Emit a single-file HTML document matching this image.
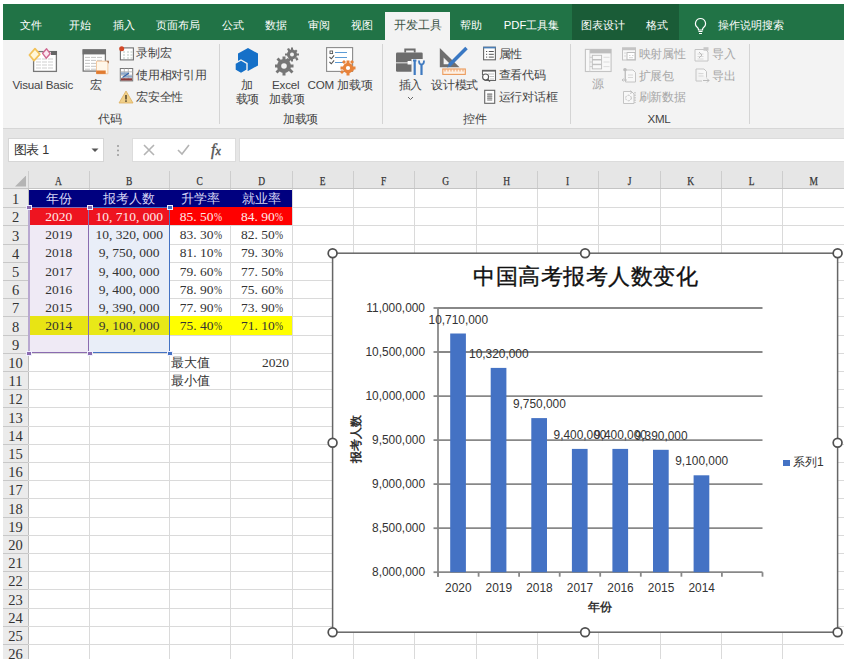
<!DOCTYPE html><html><head><meta charset="utf-8"><title>Excel</title><style>
html,body{margin:0;padding:0;width:844px;height:666px;overflow:hidden;background:#fff;position:relative;font-family:"Liberation Sans",sans-serif;}
.a{position:absolute;white-space:nowrap;}
.tab{position:absolute;top:18px;font-size:11.3px;line-height:14px;color:#fff;}
.rt{position:absolute;font-size:11.6px;letter-spacing:-0.2px;line-height:14px;color:#444;white-space:nowrap;}
.dis{color:#a6a6a6;}
.sep{position:absolute;top:44px;width:1px;height:80px;background:#d4d4d4;}
.cell{position:absolute;font-family:"Liberation Serif",serif;font-size:13.5px;line-height:17px;color:#333;white-space:nowrap;text-align:center;}
.p{display:inline-block;width:6.75px;text-align:left;}
.pc{display:inline-block;width:6.75px;transform:scaleX(.72);transform-origin:0 0;}
.cj{font-size:13px;}
.ch{position:absolute;font-family:"Liberation Serif",serif;font-size:13.5px;line-height:14px;color:#333;text-align:center;transform:scaleX(.7);-webkit-text-stroke:0.25px #333;}
.rh{position:absolute;left:3px;width:25px;font-family:"Liberation Serif",serif;font-size:14.5px;line-height:16px;color:#333;text-align:center;}
.ct{position:absolute;font-size:11.9px;color:#333;white-space:nowrap;}
</style></head><body>
<div class="a" style="left:3px;top:4px;width:841px;height:36px;background:#217346"></div>
<div class="a" style="left:572px;top:4px;width:106.5px;height:36px;background:#1a5c37"></div>
<div class="a" style="left:385px;top:12px;width:65px;height:29px;background:#f3f3f3"></div>
<div class="tab" style="left:20px">文件</div>
<div class="tab" style="left:68.5px">开始</div>
<div class="tab" style="left:112.5px">插入</div>
<div class="tab" style="left:155.5px">页面布局</div>
<div class="tab" style="left:222px">公式</div>
<div class="tab" style="left:264.6px">数据</div>
<div class="tab" style="left:308.2px">审阅</div>
<div class="tab" style="left:351.2px">视图</div>
<div class="tab" style="left:460.3px">帮助</div>
<div class="tab" style="left:503.8px">PDF工具集</div>
<div class="tab" style="left:580.7px">图表设计</div>
<div class="tab" style="left:646.3px">格式</div>
<div class="tab" style="left:718px">操作说明搜索</div>
<div class="tab" style="left:394.3px;color:#3b5446;font-size:11.9px">开发工具</div>
<svg class="a" style="left:692.5px;top:17px" width="15" height="18" viewBox="0 0 15 18"><path d="M7.5 1.5a5 5 0 0 0-3 9c.8.7 1 1.5 1 2.5h4c0-1 .2-1.8 1-2.5a5 5 0 0 0-3-9z" fill="none" stroke="#fff" stroke-width="1.2"/><path d="M5.5 14.5h4M6 16.5h3" stroke="#fff" stroke-width="1.2"/></svg>
<div class="a" style="left:3px;top:40px;width:841px;height:87.5px;background:#f3f3f3"></div>
<div class="a" style="left:3px;top:127.5px;width:841px;height:1.4px;background:#d6d6d6"></div>
<div class="sep" style="left:219px"></div>
<div class="sep" style="left:381.8px"></div>
<div class="sep" style="left:570.3px"></div>
<div class="sep" style="left:748.9px"></div>
<div class="rt" style="left:50px;width:120px;text-align:center;top:112.3px">代码</div>
<div class="rt" style="left:240.5px;width:120px;text-align:center;top:112.3px">加载项</div>
<div class="rt" style="left:415.3px;width:120px;text-align:center;top:112.3px">控件</div>
<div class="rt" style="left:599px;width:120px;text-align:center;top:112.3px">XML</div>
<svg class="a" style="left:24px;top:44px" width="40" height="32" viewBox="0 0 40 32">
<rect x="9.6" y="7.6" width="22.8" height="19.8" fill="#fff" stroke="#777" stroke-width="1.3"/>
<rect x="27" y="7" width="6" height="4" fill="#666"/>
<path d="M12 15h18M12 18h18M12 21h18M12 24h18" stroke="#cfcfcf" stroke-width="1" stroke-dasharray="5 1"/>
<path d="M11 4.6 L15.8 10.3 L10 16.6 L5.4 11 Z" fill="#fff6d8" stroke="#f2c25a" stroke-width="1.7" stroke-linejoin="round"/>
<path d="M22.6 4.8 L26.1 9.7 L22.2 14.2 L18.6 9.3 Z" fill="#fbe8f1" stroke="#d06a92" stroke-width="1.4" stroke-linejoin="round"/>
</svg>
<div class="rt" style="left:12.5px;top:78px">Visual Basic</div>
<svg class="a" style="left:78px;top:44px" width="40" height="34" viewBox="0 0 40 34">
<rect x="5.2" y="5.9" width="22.2" height="21.2" fill="#fff" stroke="#777" stroke-width="1.3"/>
<rect x="4.6" y="5.4" width="23.4" height="5" fill="#6f6f6f"/>
<path d="M7 13.4h18M7 16.4h18M7 19.4h18M7 22.3h18M7 25.2h18" stroke="#bdbdbd" stroke-width="0.9" stroke-dasharray="5 1"/>
<path d="M18.5 17.2h11.4v12.6h-11.4z" fill="#fff7ea" stroke="#f3c9a0" stroke-width="1"/>
<path d="M28 16.8h3v3z" fill="#b08060"/>
<rect x="18.2" y="26.5" width="9.5" height="3.4" fill="#e07b30"/>
</svg>
<div class="rt" style="left:90px;top:78px">宏</div>
<svg class="a" style="left:118px;top:46px" width="17" height="15" viewBox="0 0 17 15">
<rect x="2.4" y="1.9" width="13" height="12" fill="#fff" stroke="#707070" stroke-width="1.1"/>
<path d="M5 6h2M9 6h2M12.5 6h2M5 9h2M9 9h2M12.5 9h2M5 12h2M9 12h2M12.5 12h2" stroke="#b8c8c0" stroke-width="1"/>
<circle cx="3.7" cy="2.7" r="2.5" fill="#d24726"/>
</svg>
<div class="rt" style="left:136px;top:46.3px">录制宏</div>
<svg class="a" style="left:118px;top:67px" width="16" height="15" viewBox="0 0 16 15">
<rect x="2.3" y="1.5" width="12.4" height="12.4" fill="#fff" stroke="#777" stroke-width="1"/>
<path d="M2.3 4.8h12.4M2.3 8.2h12.4M2.3 11h12.4M6.3 1.5v12.4M10.3 1.5v12.4" stroke="#aaa" stroke-width="0.8"/>
<rect x="3" y="5.3" width="7" height="2.5" fill="#8fa8c8"/><rect x="7" y="8.6" width="7" height="2" fill="#8fa8c8"/>
<rect x="3" y="11.3" width="11" height="2.2" fill="#8a3a3a"/>
<path d="M4.5 10.5L11 6" stroke="#2f62a8" stroke-width="1.1"/>
</svg>
<div class="rt" style="left:136px;top:67.5px">使用相对引用</div>
<svg class="a" style="left:118px;top:90px" width="16" height="14" viewBox="0 0 16 14">
<path d="M8 1 L15 13 H1 Z" fill="#f0d08a" stroke="#ddb060" stroke-width="0.8"/>
<rect x="7.2" y="5" width="1.6" height="4.5" fill="#5a4a30"/><rect x="7.2" y="10.3" width="1.6" height="1.6" fill="#5a4a30"/>
</svg>
<div class="rt" style="left:136px;top:89.7px">宏安全性</div>
<svg class="a" style="left:233px;top:47px" width="27" height="27" viewBox="0 0 27 27">
<path d="M15 1 L25 6.5 V18.5 L15 24 L5 18.5 V6.5 Z" fill="#1570c8"/>
<path d="M8 13 L14 16.5 V23 L8 26.5 L2 23 V16.5 Z" fill="#1570c8" stroke="#f3f3f3" stroke-width="1.4"/>
</svg>
<div class="rt" style="left:240.5px;top:78px">加</div>
<div class="rt" style="left:235.5px;top:91.5px">载项</div>
<svg class="a" style="left:274.5px;top:46.5px" width="26" height="29" viewBox="0 0 26 29">
<g fill="#767676">
<circle cx="17" cy="7.5" r="5"/>
<path d="M16 0.5h2v3h-2zM16 11.5h2v3h-2zM10 6.5h3v2h-3zM21 6.5h3v2h-3zM12 2l2 -1 1.5 2.5 -2 1.2zM20 11l2 -1 1.5 2.5 -2 1.2zM21 2.5l1.5 1.5 -2 2 -1.5 -1.5zM12.5 11l1.5 1.5 -2 2 -1.5 -1.5z"/>
<circle cx="9" cy="19" r="7"/>
<path d="M7.5 9.5h3v4h-3zM7.5 24.5h3v4h-3zM-0.5 17.5h4v3h-4zM14.5 17.5h4v3h-4zM1.5 12.5l2-2 3 3-2 2zM13.5 23.5l2-2 3 3-2 2zM14.5 10.5l2 2-3 3-2-2zM3.5 21.5l2 2-3 3-2-2z"/>
</g>
<circle cx="17" cy="7.5" r="2" fill="#f3f3f3"/><circle cx="9" cy="19" r="2.8" fill="#f3f3f3"/>
</svg>
<div class="rt" style="left:272px;top:78px">Excel</div>
<div class="rt" style="left:269px;top:91.5px">加载项</div>
<svg class="a" style="left:325px;top:46px" width="34" height="32" viewBox="0 0 34 32">
<rect x="1.6" y="1.6" width="26" height="23.8" fill="#fff" stroke="#8a8a8a" stroke-width="1.1"/>
<rect x="5" y="5" width="2.6" height="2.6" fill="none" stroke="#555" stroke-width="0.9"/>
<path d="M10 6.5h12M10 11.5h12M10 16.5h9" stroke="#5b9bd5" stroke-width="1.2"/>
<path d="M4.5 11l1.8 1.8 2.8-3.4M4.5 16l1.8 1.8 2.8-3.4" stroke="#555" fill="none" stroke-width="1.1"/>
<g fill="#e8833a"><circle cx="23" cy="22" r="5.2"/>
<path d="M21.5 14.5h3v3h-3zM21.5 26.5h3v3h-3zM15.5 20.5h3v3h-3zM27.5 20.5h3v3h-3zM17 16l2-2 2 2-2 2zM25 24l2-2 2 2-2 2zM25 16l2 2 2-2-2-2zM17 28l2-2-2-2-2 2z"/></g>
<circle cx="23" cy="22" r="2.1" fill="#fff"/>
</svg>
<div class="rt" style="left:307.6px;top:78px">COM 加载项</div>
<svg class="a" style="left:390px;top:42px" width="40" height="36" viewBox="0 0 40 36">
<path d="M15.2 10.5V7.5h9.5v3" fill="none" stroke="#6d6d6d" stroke-width="1.8"/>
<rect x="6" y="10.6" width="26.7" height="19.2" rx="1.2" fill="#6d6d6d"/>
<rect x="6" y="20.2" width="26.7" height="1.2" fill="#d8d8d8"/>
<rect x="17.6" y="19" width="4" height="3.5" fill="#fff"/>
<rect x="21.5" y="17" width="12" height="17" fill="#f3f3f3"/>
<path d="M24.7 18v15M31.5 22v11" stroke="#3f7ac0" stroke-width="2.2"/>
<path d="M23 18.5h3.4M29 18.5c0 3 1 4 2.5 4s2.5-1 2.5-4" stroke="#3f7ac0" stroke-width="1.8" fill="none"/>
</svg>
<div class="rt" style="left:398.5px;top:78px">插入</div>
<svg class="a" style="left:407px;top:96px" width="7" height="5" viewBox="0 0 7 5"><path d="M1 1l2.5 2.5L6 1" stroke="#666" fill="none"/></svg>
<svg class="a" style="left:436px;top:44px" width="34" height="34" viewBox="0 0 34 34">
<path d="M3.8 4 V23.2 H23.5 Z" fill="#6f6f6f"/>
<path d="M7.6 13.5 V20.2 H14.3 Z" fill="#f3f3f3"/>
<path d="M30.5 4 L13 21.5" stroke="#3a78c3" stroke-width="3.6"/>
<path d="M12.5 21.5 L11.2 23.8 L13.6 22.6 Z" fill="#3a78c3"/>
<rect x="6.8" y="25" width="22.5" height="5.4" fill="#fdf0e4" stroke="#ec9a5a" stroke-width="1.1"/>
<path d="M9 25.5v2M12 25.5v2M15 25.5v2M18 25.5v2M21 25.5v2M24 25.5v2M27 25.5v2" stroke="#e8833a" stroke-width="0.8"/>
</svg>
<div class="rt" style="left:431px;top:78px">设计模式</div>
<svg class="a" style="left:482px;top:46px" width="15" height="15" viewBox="0 0 15 15">
<rect x="1.6" y="1.2" width="11.8" height="12.6" fill="#fff" stroke="#666" stroke-width="1.1"/>
<rect x="1.2" y="0.8" width="12.6" height="1.6" fill="#4a7fb8"/>
<path d="M4 5.5h1.2M4 8.3h1.2M4 11.1h1.2M6.8 5.5h5M6.8 8.3h5M6.8 11.1h5" stroke="#555" stroke-width="1"/>
</svg>
<div class="rt" style="left:498.7px;top:46.8px">属性</div>
<svg class="a" style="left:481px;top:68px" width="16" height="15" viewBox="0 0 16 15">
<path d="M4 9.5V12.5h10.5V2.5H1.5v4.5" fill="#fff" stroke="#666" stroke-width="1.1"/>
<rect x="1" y="1.8" width="14" height="1.8" fill="#666"/>
<path d="M7 6h6M8.5 8.5h4.5M9 11h4" stroke="#bbb" stroke-width="0.9"/>
<circle cx="4.6" cy="9" r="3" fill="#fff" stroke="#555" stroke-width="1.1"/>
<path d="M6.6 11.2l2.4 2.4" stroke="#555" stroke-width="1.4"/>
</svg>
<div class="rt" style="left:498.7px;top:68px">查看代码</div>
<svg class="a" style="left:483px;top:89px" width="13" height="16" viewBox="0 0 13 16">
<rect x="1.7" y="1.3" width="10" height="13" fill="#fff" stroke="#666" stroke-width="1.1"/>
<rect x="4.2" y="4" width="5" height="8" fill="#b8b8b8"/>
<path d="M4.2 5.5h5M4.2 7.5h5M4.2 9.5h5" stroke="#8a8a8a" stroke-width="0.7"/>
</svg>
<div class="rt" style="left:498.7px;top:89.5px">运行对话框</div>
<svg class="a" style="left:584px;top:48px" width="28" height="25" viewBox="0 0 28 25">
<rect x="1.4" y="1.4" width="25.7" height="22.1" fill="#f8f8f8" stroke="#c4c4c4" stroke-width="1.1"/>
<rect x="5.8" y="1.4" width="21.3" height="4" fill="#bdbdbd"/>
<path d="M5.8 1.4v22.1" stroke="#d0d0d0" stroke-width="0.8"/>
<path d="M5.8 9.3h2.4M5.8 14h2.4M5.8 18.6h2.4" stroke="#c4c4c4" stroke-width="0.8"/>
<rect x="8.3" y="7.3" width="9.3" height="4.2" fill="none" stroke="#bcbcbc" stroke-width="0.9"/>
<rect x="8.3" y="12" width="9.3" height="4.2" fill="none" stroke="#bcbcbc" stroke-width="0.9"/>
<rect x="8.3" y="16.7" width="9.3" height="4.2" fill="none" stroke="#bcbcbc" stroke-width="0.9"/>
<path d="M19.5 9.3h6M19.5 14h6M19.5 18.6h6" stroke="#d4d4d4" stroke-width="0.8"/>
</svg>
<div class="rt dis" style="left:591.5px;top:76.5px">源</div>
<svg class="a" style="left:621px;top:46px" width="16" height="16" viewBox="0 0 16 16">
<rect x="1.5" y="1.8" width="13" height="12.2" fill="#f8f8f8" stroke="#c4c4c4" stroke-width="1"/>
<rect x="1.5" y="1.8" width="13" height="2.4" fill="#c4c4c4"/>
<rect x="6" y="6.5" width="8" height="7.2" fill="#fff" stroke="#bdbdbd" stroke-width="1"/>
<path d="M8 9.5h1.5M11 9.5h1.5M8 11.7h4" stroke="#c8c8c8" stroke-width="0.8"/>
<path d="M3 7h2M3 10h2" stroke="#cfcfcf" stroke-width="0.8"/>
</svg>
<svg class="a" style="left:621px;top:67px" width="16" height="16" viewBox="0 0 16 16">
<path d="M4.5 3h7.5l2.5 2.5v9.5h-10z" fill="#f8f8f8" stroke="#c4c4c4" stroke-width="1"/>
<circle cx="4" cy="2.8" r="1.8" fill="#bbb"/>
<path d="M4 4.5v9.5M1 13h5M2.5 11.5l-1.5 1.5 1.5 1.5" stroke="#c0c0c0" stroke-width="0.9" fill="none"/>
<path d="M7 8h5M7 10.5h5" stroke="#cfcfcf" stroke-width="0.8"/>
</svg>
<svg class="a" style="left:621px;top:89px" width="16" height="16" viewBox="0 0 16 16">
<path d="M2.5 2.5h8l2.5 2.5v9.5h-10.5z" fill="#f8f8f8" stroke="#c4c4c4" stroke-width="1"/>
<circle cx="7.5" cy="9" r="2.8" fill="none" stroke="#bbb" stroke-width="1" stroke-dasharray="2 1"/>
<path d="M14 3v11" stroke="#c0c0c0" stroke-width="1.3" stroke-dasharray="1.5 1"/>
<path d="M9.5 1.5l1.5 2-2 1" stroke="#bbb" fill="none" stroke-width="0.9"/>
</svg>
<svg class="a" style="left:693px;top:46px" width="17" height="16" viewBox="0 0 17 16">
<path d="M2 3.5h10.5l2.5 2.5v9h-13z" fill="#f8f8f8" stroke="#c4c4c4" stroke-width="1"/>
<rect x="10.5" y="1.2" width="5" height="3.5" fill="#c8c8c8"/>
<path d="M4.5 8h6M4.5 10.5h6M4.5 13h6" stroke="#d0d0d0" stroke-width="0.8"/>
<path d="M6 6l3 3-3 3" stroke="#bbb" fill="none" stroke-width="1"/>
</svg>
<svg class="a" style="left:694px;top:67px" width="17" height="16" viewBox="0 0 17 16">
<path d="M2 2h8l2.5 2.5v6" fill="#f8f8f8" stroke="#c4c4c4" stroke-width="1"/>
<path d="M2 2v12h6" fill="none" stroke="#c4c4c4" stroke-width="1"/>
<path d="M4.5 6.5h5M4.5 9h5" stroke="#d0d0d0" stroke-width="0.8"/>
<path d="M9 13.5h6M13 11.5l2 2-2 2" stroke="#bbb" fill="none" stroke-width="1"/>
</svg>
<div class="rt dis" style="left:638.7px;top:47px">映射属性</div>
<div class="rt dis" style="left:638.7px;top:69px">扩展包</div>
<div class="rt dis" style="left:638.7px;top:90px">刷新数据</div>
<div class="rt dis" style="left:712px;top:47px">导入</div>
<div class="rt dis" style="left:712px;top:69px">导出</div>
<div class="a" style="left:3px;top:129px;width:841px;height:39px;background:#e6e6e6"></div>
<div class="a" style="left:7.7px;top:137.8px;width:94px;height:22.5px;background:#fff;border:1px solid #d6d6d6"></div>
<div class="rt" style="left:13.5px;top:143px;font-size:12.5px;color:#333">图表 1</div>
<svg class="a" style="left:91px;top:148px" width="8" height="5" viewBox="0 0 8 5"><path d="M0.5 0.5h7L4 4z" fill="#555"/></svg>
<svg class="a" style="left:116px;top:144px" width="4" height="13" viewBox="0 0 4 13"><circle cx="2" cy="2" r="1" fill="#999"/><circle cx="2" cy="6.5" r="1" fill="#999"/><circle cx="2" cy="11" r="1" fill="#999"/></svg>
<div class="a" style="left:132px;top:137.8px;width:101.5px;height:22.5px;background:#fff;border:1px solid #dcdcdc"></div>
<svg class="a" style="left:143px;top:144px" width="12" height="12" viewBox="0 0 12 12"><path d="M1 1l10 10M11 1L1 11" stroke="#b4b4b4" stroke-width="1.6"/></svg>
<svg class="a" style="left:177px;top:144px" width="13" height="12" viewBox="0 0 13 12"><path d="M1 6l4 4 7-9" stroke="#b4b4b4" stroke-width="1.6" fill="none"/></svg>
<div class="a" style="left:211px;top:140.5px;font-family:'Liberation Serif',serif;font-style:italic;font-size:16px;color:#555;-webkit-text-stroke:0.4px #555">f<span style="font-size:12px">x</span></div>
<div class="a" style="left:238.8px;top:137.8px;width:606px;height:22.5px;background:#fff;border:1px solid #dcdcdc"></div>
<div class="a" style="left:3px;top:168px;width:841px;height:21px;background:#e6e6e6"></div>
<div class="a" style="left:3px;top:189px;width:25.4px;height:470px;background:#ebebeb"></div>
<svg class="a" style="left:14.5px;top:175px" width="11.5" height="11.5" viewBox="0 0 11.5 11.5"><path d="M11.5 0V11.5H0Z" fill="#b4b4b4"/></svg>
<div class="ch" style="left:28.4px;width:60.6px;top:174px">A</div>
<div class="a" style="left:88.5px;top:171px;width:1px;height:18px;background:#cdcdcd"></div>
<div class="ch" style="left:89px;width:80.4px;top:174px">B</div>
<div class="a" style="left:168.9px;top:171px;width:1px;height:18px;background:#cdcdcd"></div>
<div class="ch" style="left:169.4px;width:61.329999999999984px;top:174px">C</div>
<div class="a" style="left:230.23px;top:171px;width:1px;height:18px;background:#cdcdcd"></div>
<div class="ch" style="left:230.73px;width:61.33000000000001px;top:174px">D</div>
<div class="a" style="left:291.56px;top:171px;width:1px;height:18px;background:#cdcdcd"></div>
<div class="ch" style="left:292.06px;width:61.329999999999984px;top:174px">E</div>
<div class="a" style="left:352.89px;top:171px;width:1px;height:18px;background:#cdcdcd"></div>
<div class="ch" style="left:353.39px;width:61.33000000000004px;top:174px">F</div>
<div class="a" style="left:414.22px;top:171px;width:1px;height:18px;background:#cdcdcd"></div>
<div class="ch" style="left:414.72px;width:61.329999999999984px;top:174px">G</div>
<div class="a" style="left:475.55px;top:171px;width:1px;height:18px;background:#cdcdcd"></div>
<div class="ch" style="left:476.05px;width:61.329999999999984px;top:174px">H</div>
<div class="a" style="left:536.88px;top:171px;width:1px;height:18px;background:#cdcdcd"></div>
<div class="ch" style="left:537.38px;width:61.33000000000004px;top:174px">I</div>
<div class="a" style="left:598.21px;top:171px;width:1px;height:18px;background:#cdcdcd"></div>
<div class="ch" style="left:598.71px;width:61.32999999999993px;top:174px">J</div>
<div class="a" style="left:659.54px;top:171px;width:1px;height:18px;background:#cdcdcd"></div>
<div class="ch" style="left:660.04px;width:61.33000000000004px;top:174px">K</div>
<div class="a" style="left:720.87px;top:171px;width:1px;height:18px;background:#cdcdcd"></div>
<div class="ch" style="left:721.37px;width:61.33000000000004px;top:174px">L</div>
<div class="a" style="left:782.2px;top:171px;width:1px;height:18px;background:#cdcdcd"></div>
<div class="ch" style="left:782.7px;width:61.32999999999993px;top:174px">M</div>
<div class="a" style="left:843.53px;top:171px;width:1px;height:18px;background:#cdcdcd"></div>
<div class="a" style="left:28px;top:171px;width:1px;height:18px;background:#cdcdcd"></div>
<div class="a" style="left:3px;top:188.3px;width:841px;height:1.2px;background:#c4c4c4"></div>
<div class="a" style="left:28px;top:189px;width:1px;height:470px;background:#bdbdbd"></div>
<div class="a" style="left:3px;top:207.2px;width:25.4px;height:1px;background:#c8c8c8"></div>
<div class="a" style="left:28.4px;top:207.2px;width:816px;height:1px;background:#dadada"></div>
<div class="a" style="left:3px;top:225.4px;width:25.4px;height:1px;background:#c8c8c8"></div>
<div class="a" style="left:28.4px;top:225.4px;width:816px;height:1px;background:#dadada"></div>
<div class="a" style="left:3px;top:243.6px;width:25.4px;height:1px;background:#c8c8c8"></div>
<div class="a" style="left:28.4px;top:243.6px;width:816px;height:1px;background:#dadada"></div>
<div class="a" style="left:3px;top:261.8px;width:25.4px;height:1px;background:#c8c8c8"></div>
<div class="a" style="left:28.4px;top:261.8px;width:816px;height:1px;background:#dadada"></div>
<div class="a" style="left:3px;top:280.0px;width:25.4px;height:1px;background:#c8c8c8"></div>
<div class="a" style="left:28.4px;top:280.0px;width:816px;height:1px;background:#dadada"></div>
<div class="a" style="left:3px;top:298.2px;width:25.4px;height:1px;background:#c8c8c8"></div>
<div class="a" style="left:28.4px;top:298.2px;width:816px;height:1px;background:#dadada"></div>
<div class="a" style="left:3px;top:316.4px;width:25.4px;height:1px;background:#c8c8c8"></div>
<div class="a" style="left:28.4px;top:316.4px;width:816px;height:1px;background:#dadada"></div>
<div class="a" style="left:3px;top:334.6px;width:25.4px;height:1px;background:#c8c8c8"></div>
<div class="a" style="left:28.4px;top:334.6px;width:816px;height:1px;background:#dadada"></div>
<div class="a" style="left:3px;top:352.8px;width:25.4px;height:1px;background:#c8c8c8"></div>
<div class="a" style="left:28.4px;top:352.8px;width:816px;height:1px;background:#dadada"></div>
<div class="a" style="left:3px;top:371.0px;width:25.4px;height:1px;background:#c8c8c8"></div>
<div class="a" style="left:28.4px;top:371.0px;width:816px;height:1px;background:#dadada"></div>
<div class="a" style="left:3px;top:389.2px;width:25.4px;height:1px;background:#c8c8c8"></div>
<div class="a" style="left:28.4px;top:389.2px;width:816px;height:1px;background:#dadada"></div>
<div class="a" style="left:3px;top:407.4px;width:25.4px;height:1px;background:#c8c8c8"></div>
<div class="a" style="left:28.4px;top:407.4px;width:816px;height:1px;background:#dadada"></div>
<div class="a" style="left:3px;top:425.6px;width:25.4px;height:1px;background:#c8c8c8"></div>
<div class="a" style="left:28.4px;top:425.6px;width:816px;height:1px;background:#dadada"></div>
<div class="a" style="left:3px;top:443.8px;width:25.4px;height:1px;background:#c8c8c8"></div>
<div class="a" style="left:28.4px;top:443.8px;width:816px;height:1px;background:#dadada"></div>
<div class="a" style="left:3px;top:462.0px;width:25.4px;height:1px;background:#c8c8c8"></div>
<div class="a" style="left:28.4px;top:462.0px;width:816px;height:1px;background:#dadada"></div>
<div class="a" style="left:3px;top:480.2px;width:25.4px;height:1px;background:#c8c8c8"></div>
<div class="a" style="left:28.4px;top:480.2px;width:816px;height:1px;background:#dadada"></div>
<div class="a" style="left:3px;top:498.4px;width:25.4px;height:1px;background:#c8c8c8"></div>
<div class="a" style="left:28.4px;top:498.4px;width:816px;height:1px;background:#dadada"></div>
<div class="a" style="left:3px;top:516.6px;width:25.4px;height:1px;background:#c8c8c8"></div>
<div class="a" style="left:28.4px;top:516.6px;width:816px;height:1px;background:#dadada"></div>
<div class="a" style="left:3px;top:534.8px;width:25.4px;height:1px;background:#c8c8c8"></div>
<div class="a" style="left:28.4px;top:534.8px;width:816px;height:1px;background:#dadada"></div>
<div class="a" style="left:3px;top:553.0px;width:25.4px;height:1px;background:#c8c8c8"></div>
<div class="a" style="left:28.4px;top:553.0px;width:816px;height:1px;background:#dadada"></div>
<div class="a" style="left:3px;top:571.2px;width:25.4px;height:1px;background:#c8c8c8"></div>
<div class="a" style="left:28.4px;top:571.2px;width:816px;height:1px;background:#dadada"></div>
<div class="a" style="left:3px;top:589.4px;width:25.4px;height:1px;background:#c8c8c8"></div>
<div class="a" style="left:28.4px;top:589.4px;width:816px;height:1px;background:#dadada"></div>
<div class="a" style="left:3px;top:607.6px;width:25.4px;height:1px;background:#c8c8c8"></div>
<div class="a" style="left:28.4px;top:607.6px;width:816px;height:1px;background:#dadada"></div>
<div class="a" style="left:3px;top:625.8px;width:25.4px;height:1px;background:#c8c8c8"></div>
<div class="a" style="left:28.4px;top:625.8px;width:816px;height:1px;background:#dadada"></div>
<div class="a" style="left:3px;top:644.0px;width:25.4px;height:1px;background:#c8c8c8"></div>
<div class="a" style="left:28.4px;top:644.0px;width:816px;height:1px;background:#dadada"></div>
<div class="rh" style="top:191.2px">1</div>
<div class="rh" style="top:209.4px">2</div>
<div class="rh" style="top:227.6px">3</div>
<div class="rh" style="top:245.8px">4</div>
<div class="rh" style="top:264.0px">5</div>
<div class="rh" style="top:282.2px">6</div>
<div class="rh" style="top:300.4px">7</div>
<div class="rh" style="top:318.6px">8</div>
<div class="rh" style="top:336.8px">9</div>
<div class="rh" style="top:355.0px">10</div>
<div class="rh" style="top:373.2px">11</div>
<div class="rh" style="top:391.4px">12</div>
<div class="rh" style="top:409.6px">13</div>
<div class="rh" style="top:427.8px">14</div>
<div class="rh" style="top:446.0px">15</div>
<div class="rh" style="top:464.2px">16</div>
<div class="rh" style="top:482.4px">17</div>
<div class="rh" style="top:500.6px">18</div>
<div class="rh" style="top:518.8px">19</div>
<div class="rh" style="top:537.0px">20</div>
<div class="rh" style="top:555.2px">21</div>
<div class="rh" style="top:573.4px">22</div>
<div class="rh" style="top:591.6px">23</div>
<div class="rh" style="top:609.8px">24</div>
<div class="rh" style="top:628.0px">25</div>
<div class="rh" style="top:646.2px">26</div>
<div class="a" style="left:88.5px;top:189px;width:1px;height:470px;background:#dadada"></div>
<div class="a" style="left:168.9px;top:189px;width:1px;height:470px;background:#dadada"></div>
<div class="a" style="left:230.23px;top:189px;width:1px;height:470px;background:#dadada"></div>
<div class="a" style="left:291.56px;top:189px;width:1px;height:470px;background:#dadada"></div>
<div class="a" style="left:352.89px;top:189px;width:1px;height:470px;background:#dadada"></div>
<div class="a" style="left:414.22px;top:189px;width:1px;height:470px;background:#dadada"></div>
<div class="a" style="left:475.55px;top:189px;width:1px;height:470px;background:#dadada"></div>
<div class="a" style="left:536.88px;top:189px;width:1px;height:470px;background:#dadada"></div>
<div class="a" style="left:598.21px;top:189px;width:1px;height:470px;background:#dadada"></div>
<div class="a" style="left:659.54px;top:189px;width:1px;height:470px;background:#dadada"></div>
<div class="a" style="left:720.87px;top:189px;width:1px;height:470px;background:#dadada"></div>
<div class="a" style="left:782.2px;top:189px;width:1px;height:470px;background:#dadada"></div>
<div class="a" style="left:29.0px;top:189.8px;width:263.1px;height:17.4px;background:#00007f"></div>
<div class="a" style="left:28.4px;top:207.2px;width:60.6px;height:18.2px;background:#ee1420"></div>
<div class="a" style="left:89px;top:207.2px;width:80.4px;height:18.2px;background:#ee1420"></div>
<div class="a" style="left:169.4px;top:207.2px;width:122.7px;height:18.2px;background:#ff0000"></div>
<div class="a" style="left:28.4px;top:225.4px;width:60.6px;height:91.0px;background:#efeaf5"></div>
<div class="a" style="left:89px;top:225.4px;width:80.4px;height:91.0px;background:#e9eef8"></div>
<div class="a" style="left:28.4px;top:316.4px;width:60.6px;height:18.2px;background:#e8e414"></div>
<div class="a" style="left:89px;top:316.4px;width:80.4px;height:18.2px;background:#e8e818"></div>
<div class="a" style="left:169.4px;top:316.4px;width:122.7px;height:18.2px;background:#ffff00"></div>
<div class="a" style="left:28.4px;top:334.6px;width:60.6px;height:18.2px;background:#efeaf5"></div>
<div class="a" style="left:89px;top:334.6px;width:80.4px;height:18.2px;background:#e9eef8"></div>
<div class="cell" style="left:28.4px;width:60.6px;top:189.8px;color:#d4d4f4"><span class=cj>年份</span></div>
<div class="cell" style="left:89px;width:80.4px;top:189.8px;color:#d4d4f4"><span class=cj>报考人数</span></div>
<div class="cell" style="left:169.4px;width:61.3px;top:189.8px;color:#d4d4f4"><span class=cj>升学率</span></div>
<div class="cell" style="left:230.73px;width:61.3px;top:189.8px;color:#d4d4f4"><span class=cj>就业率</span></div>
<div class="cell" style="left:28.4px;width:60.6px;top:208.0px;color:#ffe8e8">2020</div>
<div class="cell" style="left:89px;width:80.4px;top:208.0px;color:#ffe8e8">10<span class="p">,</span>710<span class="p">,</span>000</div>
<div class="cell" style="left:169.4px;width:61.3px;top:208.0px;color:#ffe8e8">85<span class="p">.</span>50<span class="pc">%</span></div>
<div class="cell" style="left:230.73px;width:61.3px;top:208.0px;color:#ffe8e8">84<span class="p">.</span>90<span class="pc">%</span></div>
<div class="cell" style="left:28.4px;width:60.6px;top:226.2px;color:#333">2019</div>
<div class="cell" style="left:89px;width:80.4px;top:226.2px;color:#333">10<span class="p">,</span>320<span class="p">,</span>000</div>
<div class="cell" style="left:169.4px;width:61.3px;top:226.2px;color:#333">83<span class="p">.</span>30<span class="pc">%</span></div>
<div class="cell" style="left:230.73px;width:61.3px;top:226.2px;color:#333">82<span class="p">.</span>50<span class="pc">%</span></div>
<div class="cell" style="left:28.4px;width:60.6px;top:244.4px;color:#333">2018</div>
<div class="cell" style="left:89px;width:80.4px;top:244.4px;color:#333">9<span class="p">,</span>750<span class="p">,</span>000</div>
<div class="cell" style="left:169.4px;width:61.3px;top:244.4px;color:#333">81<span class="p">.</span>10<span class="pc">%</span></div>
<div class="cell" style="left:230.73px;width:61.3px;top:244.4px;color:#333">79<span class="p">.</span>30<span class="pc">%</span></div>
<div class="cell" style="left:28.4px;width:60.6px;top:262.6px;color:#333">2017</div>
<div class="cell" style="left:89px;width:80.4px;top:262.6px;color:#333">9<span class="p">,</span>400<span class="p">,</span>000</div>
<div class="cell" style="left:169.4px;width:61.3px;top:262.6px;color:#333">79<span class="p">.</span>60<span class="pc">%</span></div>
<div class="cell" style="left:230.73px;width:61.3px;top:262.6px;color:#333">77<span class="p">.</span>50<span class="pc">%</span></div>
<div class="cell" style="left:28.4px;width:60.6px;top:280.8px;color:#333">2016</div>
<div class="cell" style="left:89px;width:80.4px;top:280.8px;color:#333">9<span class="p">,</span>400<span class="p">,</span>000</div>
<div class="cell" style="left:169.4px;width:61.3px;top:280.8px;color:#333">78<span class="p">.</span>90<span class="pc">%</span></div>
<div class="cell" style="left:230.73px;width:61.3px;top:280.8px;color:#333">75<span class="p">.</span>60<span class="pc">%</span></div>
<div class="cell" style="left:28.4px;width:60.6px;top:299.0px;color:#333">2015</div>
<div class="cell" style="left:89px;width:80.4px;top:299.0px;color:#333">9<span class="p">,</span>390<span class="p">,</span>000</div>
<div class="cell" style="left:169.4px;width:61.3px;top:299.0px;color:#333">77<span class="p">.</span>90<span class="pc">%</span></div>
<div class="cell" style="left:230.73px;width:61.3px;top:299.0px;color:#333">73<span class="p">.</span>90<span class="pc">%</span></div>
<div class="cell" style="left:28.4px;width:60.6px;top:317.2px;color:#333">2014</div>
<div class="cell" style="left:89px;width:80.4px;top:317.2px;color:#333">9<span class="p">,</span>100<span class="p">,</span>000</div>
<div class="cell" style="left:169.4px;width:61.3px;top:317.2px;color:#333">75<span class="p">.</span>40<span class="pc">%</span></div>
<div class="cell" style="left:230.73px;width:61.3px;top:317.2px;color:#333">71<span class="p">.</span>10<span class="pc">%</span></div>
<div class="cell" style="left:171.4px;top:353.6px;text-align:left"><span class=cj>最大值</span></div>
<div class="cell" style="left:230.73px;width:58.3px;top:353.6px;text-align:right">2020</div>
<div class="cell" style="left:171.4px;top:371.8px;text-align:left"><span class=cj>最小值</span></div>
<div class="a" style="left:28.4px;top:206.7px;width:60.6px;height:1.3px;background:#8a6bb0"></div>
<div class="a" style="left:28.4px;top:351.8px;width:60.6px;height:1.3px;background:#8a6bb0"></div>
<div class="a" style="left:28.4px;top:206.7px;width:1.3px;height:145.6px;background:#b8a8d0"></div>
<div class="a" style="left:88.2px;top:206.7px;width:1.3px;height:145.6px;background:#8a6bb0"></div>
<div class="a" style="left:89.0px;top:206.7px;width:80.4px;height:1.3px;background:#4472c4"></div>
<div class="a" style="left:89.0px;top:351.8px;width:80.4px;height:1.3px;background:#4472c4"></div>
<div class="a" style="left:168.6px;top:206.7px;width:1.3px;height:146.1px;background:#4472c4"></div>
<div class="a" style="left:26.4px;top:204.9px;width:3.5px;height:3.5px;background:#8a6bb0;border:0.5px solid #f0f0ff"></div>
<div class="a" style="left:87.0px;top:204.9px;width:3.5px;height:3.5px;background:#8a6bb0;border:0.5px solid #f0f0ff"></div>
<div class="a" style="left:26.4px;top:350.5px;width:3.5px;height:3.5px;background:#8a6bb0;border:0.5px solid #f0f0ff"></div>
<div class="a" style="left:87.0px;top:350.5px;width:3.5px;height:3.5px;background:#8a6bb0;border:0.5px solid #f0f0ff"></div>
<div class="a" style="left:167.4px;top:204.9px;width:3.5px;height:3.5px;background:#4472c4;border:0.5px solid #f0f0ff"></div>
<div class="a" style="left:167.4px;top:350.5px;width:3.5px;height:3.5px;background:#4472c4;border:0.5px solid #f0f0ff"></div>
<div class="a" style="left:332.6px;top:253.2px;width:505.0px;height:379.00000000000006px;background:#fff"></div>
<svg class="a" style="left:0;top:0" width="844" height="666" viewBox="0 0 844 666"><line x1="438" y1="308.0" x2="762.5" y2="308.0" stroke="#888" stroke-width="1.8"/><line x1="433.5" y1="308.0" x2="438" y2="308.0" stroke="#888" stroke-width="1.8"/><line x1="438" y1="352.0" x2="762.5" y2="352.0" stroke="#888" stroke-width="1.8"/><line x1="433.5" y1="352.0" x2="438" y2="352.0" stroke="#888" stroke-width="1.8"/><line x1="438" y1="396.1" x2="762.5" y2="396.1" stroke="#888" stroke-width="1.8"/><line x1="433.5" y1="396.1" x2="438" y2="396.1" stroke="#888" stroke-width="1.8"/><line x1="438" y1="440.1" x2="762.5" y2="440.1" stroke="#888" stroke-width="1.8"/><line x1="433.5" y1="440.1" x2="438" y2="440.1" stroke="#888" stroke-width="1.8"/><line x1="438" y1="484.1" x2="762.5" y2="484.1" stroke="#888" stroke-width="1.8"/><line x1="433.5" y1="484.1" x2="438" y2="484.1" stroke="#888" stroke-width="1.8"/><line x1="438" y1="528.2" x2="762.5" y2="528.2" stroke="#888" stroke-width="1.8"/><line x1="433.5" y1="528.2" x2="438" y2="528.2" stroke="#888" stroke-width="1.8"/><line x1="438" y1="572.2" x2="762.5" y2="572.2" stroke="#888" stroke-width="1.8"/><line x1="433.5" y1="572.2" x2="438" y2="572.2" stroke="#888" stroke-width="1.8"/><line x1="438" y1="308" x2="438" y2="576.7" stroke="#888" stroke-width="1.8"/><line x1="438.0" y1="572.2" x2="438.0" y2="576.7" stroke="#888" stroke-width="1.8"/><line x1="478.6" y1="572.2" x2="478.6" y2="576.7" stroke="#888" stroke-width="1.8"/><line x1="519.1" y1="572.2" x2="519.1" y2="576.7" stroke="#888" stroke-width="1.8"/><line x1="559.7" y1="572.2" x2="559.7" y2="576.7" stroke="#888" stroke-width="1.8"/><line x1="600.2" y1="572.2" x2="600.2" y2="576.7" stroke="#888" stroke-width="1.8"/><line x1="640.8" y1="572.2" x2="640.8" y2="576.7" stroke="#888" stroke-width="1.8"/><line x1="681.4" y1="572.2" x2="681.4" y2="576.7" stroke="#888" stroke-width="1.8"/><line x1="721.9" y1="572.2" x2="721.9" y2="576.7" stroke="#888" stroke-width="1.8"/><line x1="762.5" y1="572.2" x2="762.5" y2="576.7" stroke="#888" stroke-width="1.8"/><rect x="450.2" y="333.5" width="15.7" height="238.7" fill="#4472c4"/><rect x="490.7" y="367.9" width="15.7" height="204.3" fill="#4472c4"/><rect x="531.3" y="418.1" width="15.7" height="154.1" fill="#4472c4"/><rect x="571.9" y="448.9" width="15.7" height="123.3" fill="#4472c4"/><rect x="612.4" y="448.9" width="15.7" height="123.3" fill="#4472c4"/><rect x="653.0" y="449.8" width="15.7" height="122.4" fill="#4472c4"/><rect x="693.6" y="475.3" width="15.7" height="96.9" fill="#4472c4"/><rect x="332.6" y="253.2" width="505.0" height="379.00000000000006" fill="none" stroke="#666" stroke-width="1.5"/><circle cx="332.6" cy="253.2" r="4.4" fill="#fff" stroke="#505050" stroke-width="1.7"/><circle cx="585.1" cy="253.2" r="4.4" fill="#fff" stroke="#505050" stroke-width="1.7"/><circle cx="837.6" cy="253.2" r="4.4" fill="#fff" stroke="#505050" stroke-width="1.7"/><circle cx="332.6" cy="442.70000000000005" r="4.4" fill="#fff" stroke="#505050" stroke-width="1.7"/><circle cx="837.6" cy="442.70000000000005" r="4.4" fill="#fff" stroke="#505050" stroke-width="1.7"/><circle cx="332.6" cy="632.2" r="4.4" fill="#fff" stroke="#505050" stroke-width="1.7"/><circle cx="585.1" cy="632.2" r="4.4" fill="#fff" stroke="#505050" stroke-width="1.7"/><circle cx="837.6" cy="632.2" r="4.4" fill="#fff" stroke="#505050" stroke-width="1.7"/></svg>
<div class="a" style="left:473px;top:264px;font-family:'Liberation Serif',serif;font-size:22.4px;letter-spacing:0.55px;line-height:26px;color:#111;-webkit-text-stroke:0.35px #111">中国高考报考人数变化</div>
<div class="ct" style="left:325px;width:100px;text-align:right;top:301.0px;line-height:14px">11,000,000</div>
<div class="ct" style="left:325px;width:100px;text-align:right;top:345.0px;line-height:14px">10,500,000</div>
<div class="ct" style="left:325px;width:100px;text-align:right;top:389.1px;line-height:14px">10,000,000</div>
<div class="ct" style="left:325px;width:100px;text-align:right;top:433.1px;line-height:14px">9,500,000</div>
<div class="ct" style="left:325px;width:100px;text-align:right;top:477.1px;line-height:14px">9,000,000</div>
<div class="ct" style="left:325px;width:100px;text-align:right;top:521.2px;line-height:14px">8,500,000</div>
<div class="ct" style="left:325px;width:100px;text-align:right;top:565.2px;line-height:14px">8,000,000</div>
<div class="ct" style="left:428.3px;width:60px;text-align:center;top:580.5px;line-height:14px">2020</div>
<div class="ct" style="left:468.8px;width:60px;text-align:center;top:580.5px;line-height:14px">2019</div>
<div class="ct" style="left:509.4px;width:60px;text-align:center;top:580.5px;line-height:14px">2018</div>
<div class="ct" style="left:550.0px;width:60px;text-align:center;top:580.5px;line-height:14px">2017</div>
<div class="ct" style="left:590.5px;width:60px;text-align:center;top:580.5px;line-height:14px">2016</div>
<div class="ct" style="left:631.1px;width:60px;text-align:center;top:580.5px;line-height:14px">2015</div>
<div class="ct" style="left:671.7px;width:60px;text-align:center;top:580.5px;line-height:14px">2014</div>
<div class="ct" style="left:418.3px;width:80px;text-align:center;top:312.5px;line-height:14px">10,710,000</div>
<div class="ct" style="left:458.8px;width:80px;text-align:center;top:346.9px;line-height:14px">10,320,000</div>
<div class="ct" style="left:499.4px;width:80px;text-align:center;top:397.1px;line-height:14px">9,750,000</div>
<div class="ct" style="left:540.0px;width:80px;text-align:center;top:427.9px;line-height:14px">9,400,000</div>
<div class="ct" style="left:580.5px;width:80px;text-align:center;top:427.9px;line-height:14px">9,400,000</div>
<div class="ct" style="left:621.1px;width:80px;text-align:center;top:428.8px;line-height:14px">9,390,000</div>
<div class="ct" style="left:661.7px;width:80px;text-align:center;top:454.3px;line-height:14px">9,100,000</div>
<div class="ct" style="left:588px;top:600px;font-weight:bold;font-size:12px;line-height:14px">年份</div>
<div class="ct" style="left:331px;top:432px;width:50px;text-align:center;font-weight:bold;font-size:12px;line-height:14px;transform:rotate(-90deg)">报考人数</div>
<div class="a" style="left:783.3px;top:459.8px;width:6.6px;height:6.4px;background:#4472c4"></div>
<div class="ct" style="left:793px;top:454.5px;line-height:14px;font-size:12px">系列1</div>
</body></html>
